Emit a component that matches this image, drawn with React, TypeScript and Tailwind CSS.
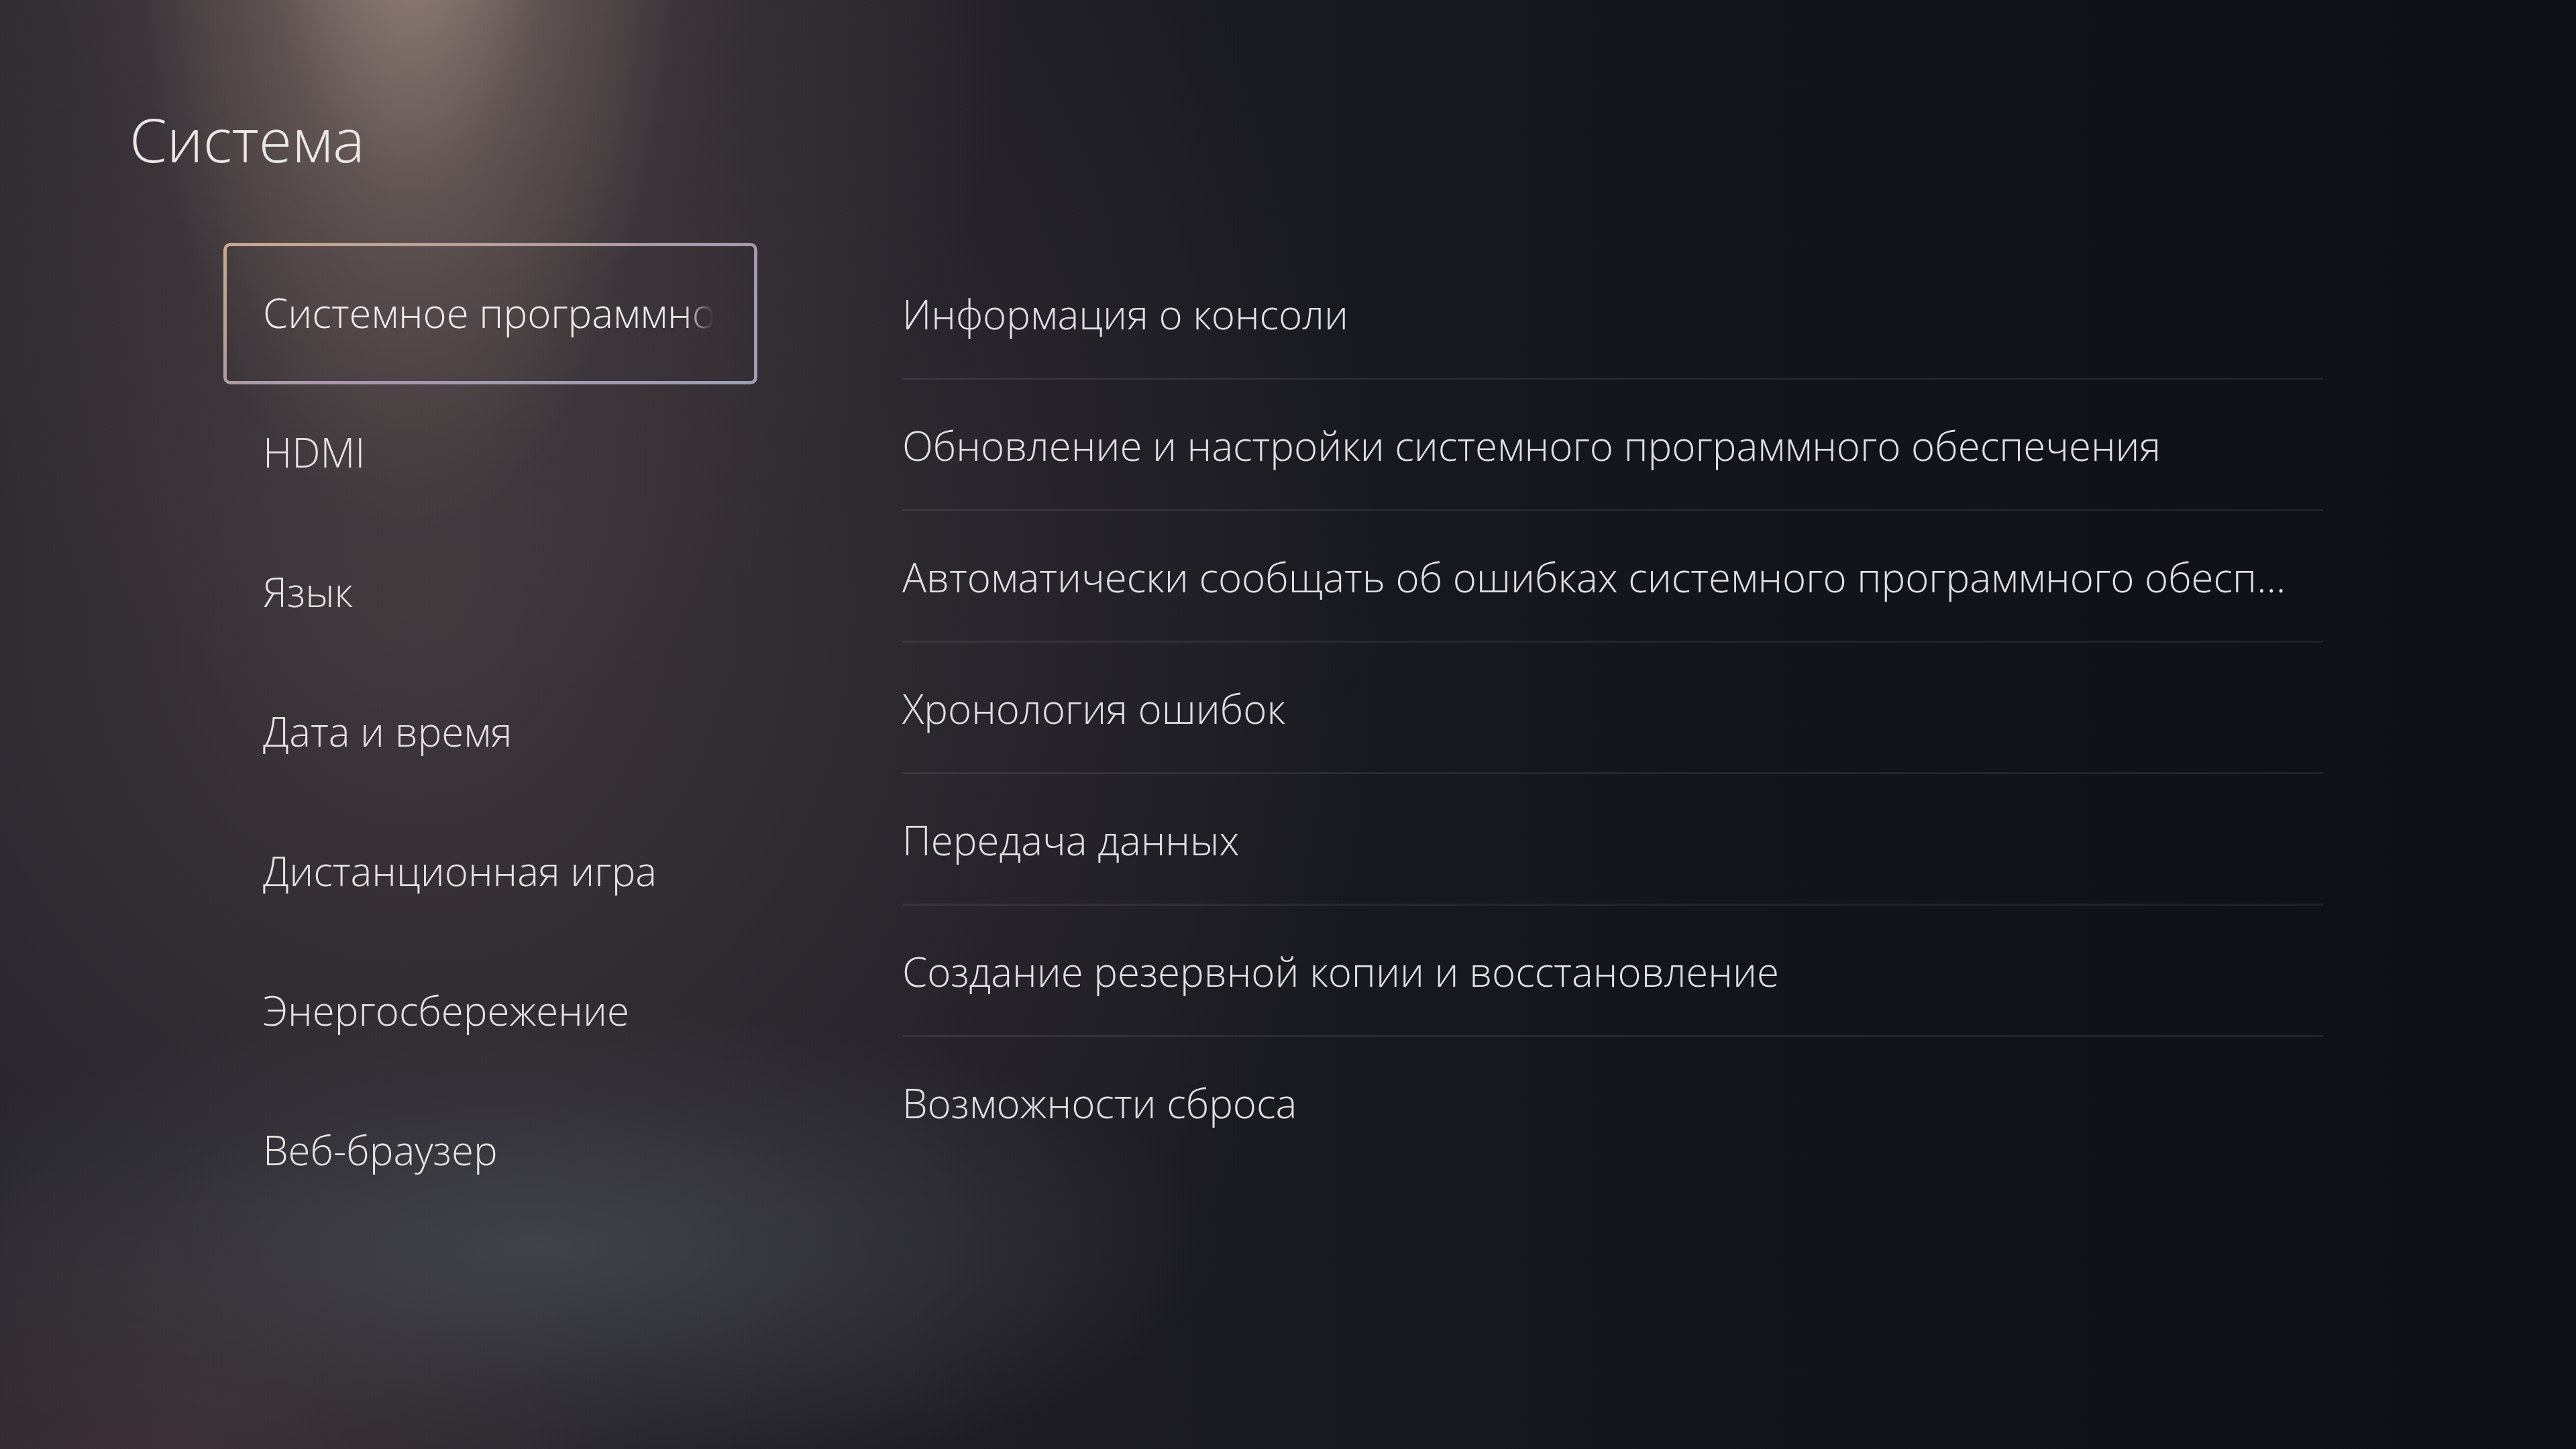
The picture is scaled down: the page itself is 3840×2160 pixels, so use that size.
import React from 'react';

const menuItems = [
  'Системное программное обеспечение',
  'HDMI',
  'Язык',
  'Дата и время',
  'Дистанционная игра',
  'Энергосбережение',
  'Веб-браузер',
];

const options = [
  'Информация о консоли',
  'Обновление и настройки системного программного обеспечения',
  'Автоматически сообщать об ошибках системного программного обеспечения',
  'Хронология ошибок',
  'Передача данных',
  'Создание резервной копии и восстановление',
  'Возможности сброса',
];

const App: React.FC = () => {
  return (
    <div
      className="relative w-[3840px] h-[2160px] overflow-hidden font-['Open_Sans',sans-serif] font-light bg-[radial-gradient(ellipse_470px_1150px_at_610px_-220px,rgba(178,156,145,0.82),rgba(130,112,106,0.45)_45%,transparent_88%),radial-gradient(ellipse_1050px_1600px_at_610px_-350px,rgba(118,102,98,0.55),rgba(90,78,78,0.25)_55%,transparent_90%),radial-gradient(ellipse_1200px_430px_at_800px_1860px,rgba(74,78,84,0.72),rgba(66,68,74,0.35)_50%,transparent_85%),radial-gradient(ellipse_900px_600px_at_250px_2200px,rgba(68,54,57,0.8),transparent_80%),radial-gradient(ellipse_1700px_1900px_at_620px_900px,rgba(66,58,61,0.95),rgba(48,44,50,0.6)_50%,transparent_85%),linear-gradient(90deg,#201f28_0%,#1d1c23_40%,#13151d_65%,#0d0f17_100%)]"
    >
      <h1 className="pl-[193px] pt-[162px] text-[90px] leading-none text-[#ebe7e4]">Система</h1>

      <div className="flex mt-[110px]">
        {/* left menu */}
        <div className="ml-[333px] w-[796px] flex flex-col">
          {menuItems.map((item, i) => (
            <div key={item} className="relative h-[208px] flex items-center pl-[59px]">
              {i === 0 && (
                <div className="absolute left-0 right-0 top-0 h-[211px] rounded-[10px] p-[5px] bg-[linear-gradient(160deg,#c9a78c_0%,#b39c9b_35%,#a597b3_60%,#9aa0b6_100%)] [mask:linear-gradient(#000_0_0)_content-box_exclude,linear-gradient(#000_0_0)]" />
              )}
              <span
                className={
                  i === 0
                    ? 'block w-[672px] overflow-hidden whitespace-nowrap text-[60px] text-[#eeebe8] [mask-image:linear-gradient(to_right,#000_calc(100%-45px),transparent)]'
                    : 'block whitespace-nowrap text-[60px] text-[#e4e2e0]'
                }
              >
                {item}
              </span>
            </div>
          ))}
        </div>

        {/* right list */}
        <div className="ml-[216px] w-[2118px] flex flex-col pt-[8px]">
          {options.map((opt, i) => (
            <div key={opt} className="flex flex-col">
              <div className="h-[196px] flex items-center pr-[30px]">
                <span className="block truncate text-[60px] text-[#e0e0e3]">{opt}</span>
              </div>
              {i < options.length - 1 && <div className="h-[3px] -mt-[3px] bg-white/[0.08]" />}
            </div>
          ))}
        </div>
      </div>
    </div>
  );
};

export default App;
